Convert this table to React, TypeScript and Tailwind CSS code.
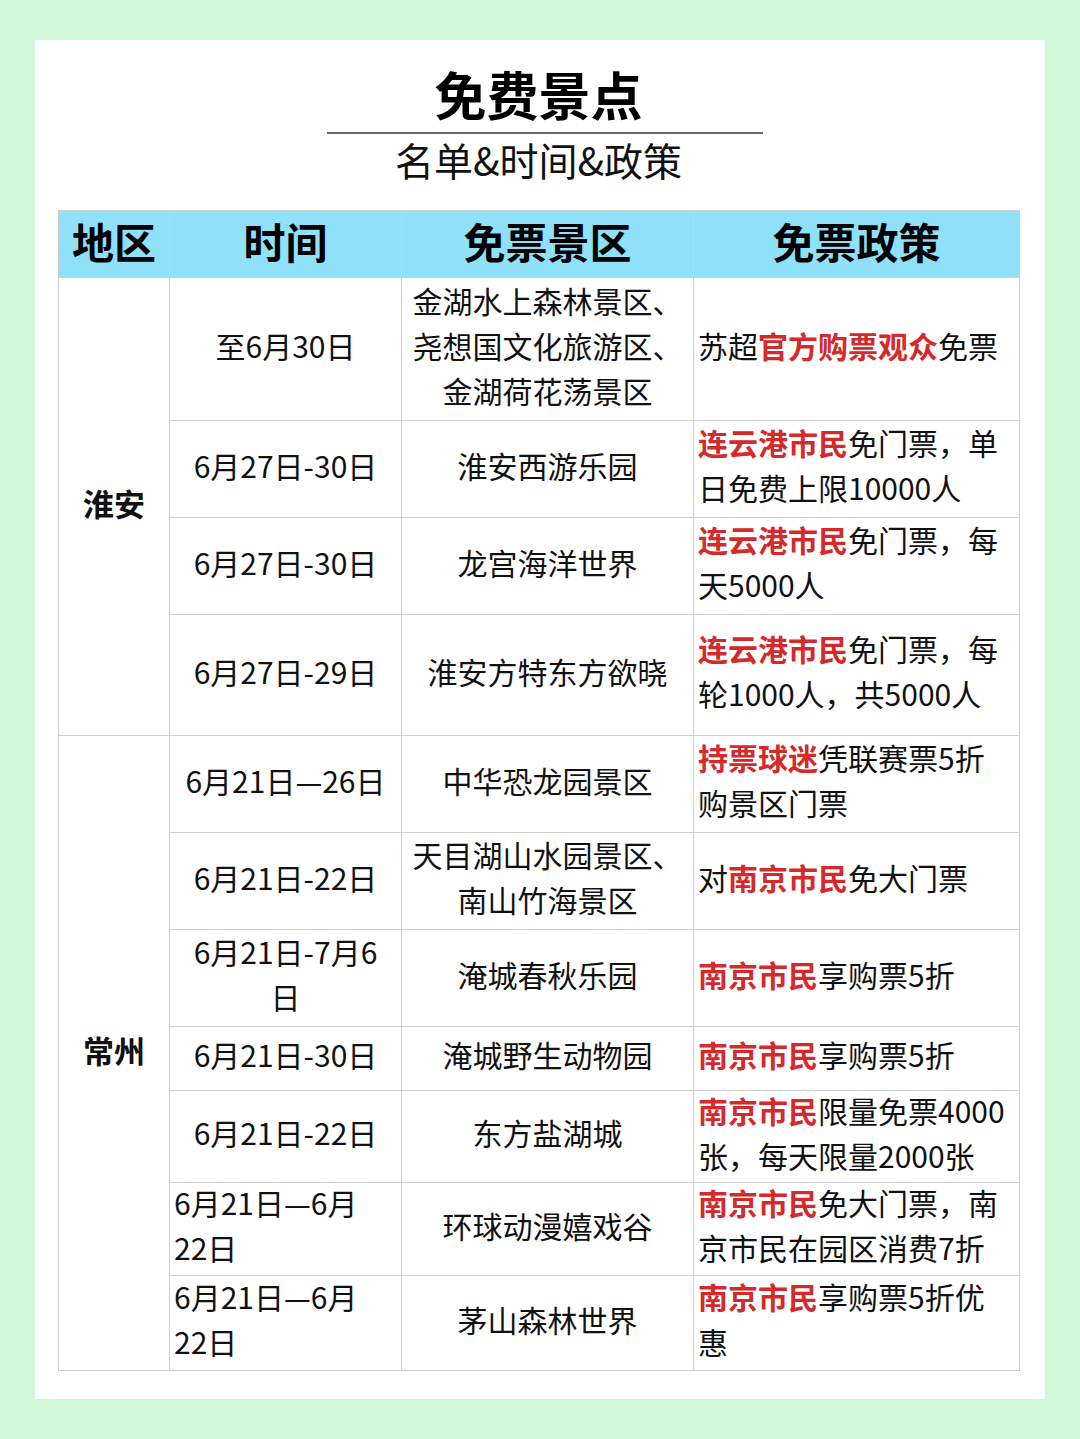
const R = ({ children }: { children: React.ReactNode }) => (
  <span className="font-bold text-[#d42a2a]">{children}</span>
);

type Row = {
  h: string;
  time: React.ReactNode;
  timeLeft?: boolean;
  spot: React.ReactNode;
  policy: React.ReactNode;
};

const huaian: Row[] = [
  {
    h: "h-[143px]",
    time: "至6月30日",
    spot: (
      <>
        金湖水上森林景区、
        <br />
        尧想国文化旅游区、
        <br />
        金湖荷花荡景区
      </>
    ),
    policy: (
      <>
        苏超<R>官方购票观众</R>免票
      </>
    ),
  },
  {
    h: "h-[97px]",
    time: "6月27日-30日",
    spot: "淮安西游乐园",
    policy: (
      <>
        <R>连云港市民</R>免门票，单
        <br />
        日免费上限10000人
      </>
    ),
  },
  {
    h: "h-[97px]",
    time: "6月27日-30日",
    spot: "龙宫海洋世界",
    policy: (
      <>
        <R>连云港市民</R>免门票，每
        <br />
        天5000人
      </>
    ),
  },
  {
    h: "h-[121px]",
    time: "6月27日-29日",
    spot: "淮安方特东方欲晓",
    policy: (
      <>
        <R>连云港市民</R>免门票，每
        <br />
        轮1000人，共5000人
      </>
    ),
  },
];

const changzhou: Row[] = [
  {
    h: "h-[97px]",
    time: "6月21日—26日",
    spot: "中华恐龙园景区",
    policy: (
      <>
        <R>持票球迷</R>凭联赛票5折
        <br />
        购景区门票
      </>
    ),
  },
  {
    h: "h-[97px]",
    time: "6月21日-22日",
    spot: (
      <>
        天目湖山水园景区、
        <br />
        南山竹海景区
      </>
    ),
    policy: (
      <>
        对<R>南京市民</R>免大门票
      </>
    ),
  },
  {
    h: "h-[97px]",
    time: (
      <>
        6月21日-7月6
        <br />日
      </>
    ),
    spot: "淹城春秋乐园",
    policy: (
      <>
        <R>南京市民</R>享购票5折
      </>
    ),
  },
  {
    h: "h-[64px]",
    time: "6月21日-30日",
    spot: "淹城野生动物园",
    policy: (
      <>
        <R>南京市民</R>享购票5折
      </>
    ),
  },
  {
    h: "h-[92px]",
    time: "6月21日-22日",
    spot: "东方盐湖城",
    policy: (
      <>
        <R>南京市民</R>限量免票4000
        <br />
        张，每天限量2000张
      </>
    ),
  },
  {
    h: "h-[93px]",
    time: (
      <>
        6月21日—6月
        <br />
        22日
      </>
    ),
    timeLeft: true,
    spot: "环球动漫嬉戏谷",
    policy: (
      <>
        <R>南京市民</R>免大门票，南
        <br />
        京市民在园区消费7折
      </>
    ),
  },
  {
    h: "h-[95px]",
    time: (
      <>
        6月21日—6月
        <br />
        22日
      </>
    ),
    timeLeft: true,
    spot: "茅山森林世界",
    policy: (
      <>
        <R>南京市民</R>享购票5折优
        <br />惠
      </>
    ),
  },
];

const cell = "border border-[#cfcfcf] p-0 align-middle";

// noto cjk sits a little low in its line box; pull the text up without growing the row
const Lift = ({ children }: { children: React.ReactNode }) => <div className="-mt-[8px]">{children}</div>;

function Group({ region, rows }: { region: string; rows: Row[] }) {
  return (
    <>
      {rows.map((r, i) => (
        <tr key={i} className={r.h}>
          {i === 0 && (
            <td rowSpan={rows.length} className={`${cell} text-center text-[31px] font-bold`}>
              <Lift>{region}</Lift>
            </td>
          )}
          <td className={`${cell} whitespace-nowrap ${r.timeLeft ? "pl-[4px] text-left" : "text-center"}`}>
            <Lift>{r.time}</Lift>
          </td>
          <td className={`${cell} whitespace-nowrap text-center`}>
            <Lift>{r.spot}</Lift>
          </td>
          <td className={`${cell} whitespace-nowrap pl-[4px] text-left`}>
            <Lift>{r.policy}</Lift>
          </td>
        </tr>
      ))}
    </>
  );
}

export default function App() {
  return (
    <div
      className="min-h-screen bg-[#d3f8d7] px-[35px] pt-[40px] pb-[41px] text-[#111]"
      style={{ fontFamily: '"Noto Sans CJK SC", "Noto Sans", sans-serif' }}
    >
      <div className="bg-white pt-[24px] pb-[28px] pl-[23px] pr-[26px]">
        <div className="flex flex-col items-center">
          <h1 className="text-[52px] leading-[60px] font-bold text-black">免费景点</h1>
          <div className="mt-[8px] ml-[12px] h-[2px] w-[436px] bg-[#6a6a6a]" />
          <p className="mt-[1px] text-[39px] leading-[48px]">名单&amp;时间&amp;政策</p>
        </div>

        <table className="mt-[27px] w-[961px] table-fixed border-collapse text-[30px] leading-[45px]">
          <colgroup>
            <col className="w-[111px]" />
            <col className="w-[232px]" />
            <col className="w-[292px]" />
            <col className="w-[326px]" />
          </colgroup>
          <thead>
            <tr className="h-[67px] bg-[#8fe0f9] text-[42px] font-bold text-black">
              <th className={`${cell} font-bold`}>
                <Lift>地区</Lift>
              </th>
              <th className={`${cell} font-bold`}>
                <Lift>时间</Lift>
              </th>
              <th className={`${cell} font-bold`}>
                <Lift>免票景区</Lift>
              </th>
              <th className={`${cell} font-bold`}>
                <Lift>免票政策</Lift>
              </th>
            </tr>
          </thead>
          <tbody>
            <Group region="淮安" rows={huaian} />
            <Group region="常州" rows={changzhou} />
          </tbody>
        </table>
      </div>
    </div>
  );
}
